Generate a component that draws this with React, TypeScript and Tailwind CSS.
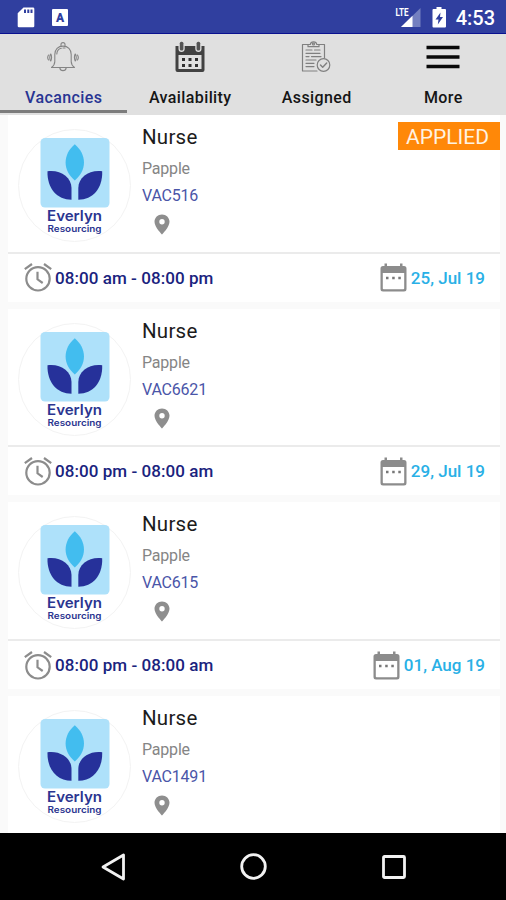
import React from "react";

type Vacancy = {
    role: string;
    place: string;
    code: string;
    time?: string;
    date?: string;
    applied?: boolean;
};

const VACANCIES: Vacancy[] = [
    { role: "Nurse", place: "Papple", code: "VAC516", time: "08:00 am - 08:00 pm", date: "25, Jul 19", applied: true },
    { role: "Nurse", place: "Papple", code: "VAC6621", time: "08:00 pm - 08:00 am", date: "29, Jul 19" },
    { role: "Nurse", place: "Papple", code: "VAC615", time: "08:00 pm - 08:00 am", date: "01, Aug 19" },
    { role: "Nurse", place: "Papple", code: "VAC1491" },
];

function StatusBar() {
    return (
        <div className="flex h-[34px] shrink-0 items-start justify-between border-b border-[#0a1190] bg-[#303f9f] pr-[11px] pl-[17px]">
            <div className="flex pt-[7px]">
                <svg width="18" height="21" viewBox="0 0 18 21">
                    <path d="M6.5 0.5H16a1.3 1.3 0 0 1 1.3 1.3V19a1.3 1.3 0 0 1-1.3 1.3H2A1.3 1.3 0 0 1 .7 19V6.3z" fill="#fff" />
                    <path d="M7 2.5h2v3.5H7zM10.3 2.5h2v3.5h-2zM13.5 2.5h2v3.5h-2z" fill="#303f9f" />
                </svg>
                <div className="mt-[2px] ml-[17px] flex h-[17px] w-[16px] items-center justify-center rounded-[1px] bg-white text-[12px] leading-none font-black text-[#303f9f]">
                    A
                </div>
            </div>
            <div className="flex pt-[7px] text-white">
                <svg width="26" height="21" viewBox="0 0 26 21">
                    <path d="M25.5 1v19H6z" fill="#7480c0" />
                    <path d="M17.5 8.8V20H6z" fill="#fff" />
                    <path d="M0 0h14v10H0z" fill="#303f9f" />
                    <text x="0.5" y="8.8" fontSize="11" fontWeight="700" textLength="13" lengthAdjust="spacingAndGlyphs" fill="#fff">LTE</text>
                </svg>
                <svg className="ml-[11px]" width="15" height="21" viewBox="0 0 15 21">
                    <path d="M4.5 0h5v2H13a1 1 0 0 1 1 1v16.5a1 1 0 0 1-1 1H1.5a1 1 0 0 1-1-1V3a1 1 0 0 1 1-1h3z" fill="#fff" />
                    <path d="M8.5 5.5L3.5 12.5H6.5L5.8 17.5 11 10H8z" fill="#303f9f" />
                </svg>
                <span className="ml-[9px] text-[20px] leading-[23px] font-medium">4:53</span>
            </div>
        </div>
    );
}

function BellIcon() {
    return (
        <svg width="32" height="30" viewBox="0 0 32 30" fill="none" stroke="#858585" strokeWidth="1.1" strokeLinecap="round" strokeLinejoin="round">
            <path d="M14 4.3V2.6a2 2 0 0 1 4 0v1.7" />
            <path d="M4.5 25.5c2-1.500 3.300-3 3.300-6v-7c0-5 3.300-8.400 8.200-8.400s8.200 3.400 8.200 8.400v7c0 3 1.300 4.500 3.300 6z" />
            <path d="M9.8 12c.2-3 2-5.200 4.500-5.700M16 6h2" />
            <path d="M12.8 25.8c.3 1.900 1.500 2.800 3.200 2.800s2.900-.9 3.200-2.800" />
            <path d="M3.8 12c-1.400 1.200-1.400 5.800 0 7 .9-2 .9-5 0-7zM1.500 13c-1 1.600-1 3.500 0 5M28.200 12c1.400 1.200 1.400 5.800 0 7-.9-2-.9-5 0-7zM30.500 13c1 1.600 1 3.500 0 5" />
        </svg>
    );
}

function AvailabilityIcon() {
    return (
        <svg width="30" height="32" viewBox="0 0 30 32">
            <path fillRule="evenodd" d="M.5 5h3V8c0 2 1.200 3 3 3s3.200-1 3.200-3V5h10.600V8c0 2 1.400 3 3.200 3s3-1 3-3V5h3V29a2 2 0 0 1-2 2h-25a2 2 0 0 1-2-2zM3.500 14v14h23V14z" fill="#424242" />
            <rect x="4.8" y="0.8" width="3.6" height="8.6" rx="1.5" fill="#555" />
            <rect x="21.6" y="0.8" width="3.6" height="8.6" rx="1.5" fill="#555" />
            <path d="M7 17h3v3H7zM13.500 17h3v3h-3zM20 17h3v3h-3zM7 23h3v3H7zM13.500 23h3v3h-3zM20 23h3v3h-3z" fill="#303030" />
        </svg>
    );
}

function AssignedIcon() {
    return (
        <svg width="30" height="32" viewBox="0 0 30 32" fill="none" stroke="#808080" strokeWidth="1.2" strokeLinecap="round" strokeLinejoin="round">
            <path d="M7.5 3.500H1.500v26.500H16M17.500 3.500h6v13.500" />
            <path d="M7 5.700V3.500h2.300c.5-3.500 6-3.500 6.500 0H18v2.200z" />
            <circle cx="12.5" cy="3" r="1" />
            <path d="M5 9h6M13.500 9H19M5 12.300h14M5 15.600h3M10.500 15.600H20M5 19h10M5 22.300h8M5 25.600h8" />
            <circle cx="22.5" cy="24" r="6.3" />
            <path d="M19.5 24l2.200 2.300 4-4.300" strokeWidth="1.4" />
        </svg>
    );
}

function MoreIcon() {
    return (
        <svg width="34" height="24" viewBox="0 0 34 24" stroke="#080808" strokeWidth="3.6">
            <path d="M.5 2.500h33M.5 12h33M.5 21.500h33" />
        </svg>
    );
}

const TABS = [
    { label: "Vacancies", icon: <BellIcon />, active: true },
    { label: "Availability", icon: <AvailabilityIcon /> },
    { label: "Assigned", icon: <AssignedIcon /> },
    { label: "More", icon: <MoreIcon /> },
];

function TabBar() {
    return (
        <div className="grid h-[81px] shrink-0 grid-cols-4 bg-[#e0e0e0]">
            {TABS.map((tab) => (
                <button key={tab.label} className="flex flex-col items-center">
                    <span className="flex h-[45px] items-center">{tab.icon}</span>
                    <span
                        className={`mt-[7px] h-[24px] pl-[1px] text-[16px] leading-[23px] font-medium tracking-[0.4px] ${tab.active ? "text-[#283593]" : "text-[#151515]"}`}
                    >
                        {tab.label}
                    </span>
                    {tab.active && <span className="h-[3px] w-full bg-[#7c7c7c]" />}
                </button>
            ))}
        </div>
    );
}

function Logo() {
    return (
        <div className="h-[113px] w-[113px] shrink-0 rounded-full border border-[#f3f3f3]">
            <svg width="111" height="111" viewBox="0 0 111 111">
                <rect x="21.5" y="8" width="69" height="69.5" rx="4.5" fill="#aee1fa" />
                <path d="M55.800 14.200C61.500 19 65 25.500 65 32.500S61.500 45.500 55.800 50.500C50 45.500 46.600 39.500 46.600 32.500S50 19 55.800 14.200z" fill="#42bdef" />
                <path d="M28.500 41.300C41 39.500 52.500 47 52.500 58V69.800C38 69.800 28 58.500 28.500 41.300z" fill="#26319a" />
                <path d="M83.200 41.300C70.700 39.500 59.300 47 59.300 58V69.800C73.800 69.800 83.700 58.500 83.200 41.300z" fill="#26319a" />
                <text x="28" y="91" fontSize="14.5" fontWeight="600" fontFamily="Inter, sans-serif" textLength="55" lengthAdjust="spacingAndGlyphs" fill="#2b3590">Everlyn</text>
                <text x="28.5" y="102" fontSize="9" fontWeight="600" fontFamily="Inter, sans-serif" textLength="54" lengthAdjust="spacingAndGlyphs" fill="#2b3590">Resourcing</text>
            </svg>
        </div>
    );
}

function PinIcon() {
    return (
        <svg width="16" height="21" viewBox="0 0 16 21">
            <path fillRule="evenodd" d="M8 .5C3.800.5.500 3.700.500 7.800.500 13.200 8 20.500 8 20.500s7.500-7.300 7.500-12.700C15.500 3.700 12.200.500 8 .5zM8 5a2.700 2.700 0 1 1 0 5.400A2.700 2.700 0 0 1 8 5z" fill="#8e8e8e" />
        </svg>
    );
}

function ClockIcon() {
    return (
        <svg width="28" height="29" viewBox="0 0 28 29" fill="none" stroke="#8c8c8c" strokeWidth="2.2">
            <circle cx="14" cy="15.8" r="11.7" />
            <path d="M13.500 8.800v7.500l5.200 3.700M.8 6.200L8 1M27.200 6.200L20 1" />
        </svg>
    );
}

function DateIcon() {
    return (
        <svg width="27" height="29" viewBox="0 0 27 29">
            <path fillRule="evenodd" d="M4.500.500h2.500V3h13V.500h2.500V3h1.500a2.500 2.500 0 0 1 2.500 2.500V26a2.500 2.500 0 0 1-2.500 2.500H3A2.500 2.500 0 0 1 .5 26V5.500A2.500 2.500 0 0 1 3 3h1.500zM2.800 10v15.500c0 .5.300.8.800.8h19.800c.5 0 .8-.3.800-.8V10z" fill="#8c8c8c" />
            <path d="M6 13.800h2.500v2.500H6zM12.200 13.800h2.500v2.500h-2.500zM18.300 13.800h2.500v2.500h-2.500z" fill="#777" />
        </svg>
    );
}

function VacancyCard({ role, place, code, time, date, applied }: Vacancy) {
    return (
        <div className="shrink-0 bg-white">
            <div className="flex h-[138.500px] border-b-2 border-[#ebebeb]">
                <div className="pt-[14px] pl-[10px]">
                    <Logo />
                </div>
                <div className="flex flex-1 flex-col items-start pt-[9px] pl-[11px]">
                    <h2 className="text-[20.500px] leading-[26px] tracking-[0.250px] text-[#1c1c1c]">{role}</h2>
                    <p className="mt-[8px] text-[16px] leading-[22px] tracking-[-0.200px] text-[#858585]">{place}</p>
                    <p className="mt-[5px] text-[16px] leading-[22px] tracking-[-0.200px] text-[#4a55a8]">{code}</p>
                    <span className="mt-[7px] ml-[12px]">
                        <PinIcon />
                    </span>
                </div>
                {applied && (
                    <span className="mt-[7px] h-[28px] w-[102px] bg-[#ff8808] pr-[3px] text-center text-[21px] leading-[30px] text-[#fff3e2]">
                        APPLIED
                    </span>
                )}
            </div>
            {time && (
                <div className="flex h-[48.300px] items-center justify-between pr-[15px] pl-[16px]">
                    <div className="flex items-center gap-[3px]">
                        <ClockIcon />
                        <span className="text-[17px] leading-[22px] font-medium tracking-[0.060px] text-[#1a237e]">{time}</span>
                    </div>
                    <div className="flex items-center gap-[4px]">
                        <DateIcon />
                        <span className="text-[17px] leading-[22px] font-medium text-[#29b0e6]">{date}</span>
                    </div>
                </div>
            )}
        </div>
    );
}

function NavBar() {
    return (
        <div className="grid h-[67px] shrink-0 grid-cols-[225px_56px_225px] items-center bg-black">
            <svg className="ml-[100px]" width="27" height="30" viewBox="0 0 27 30" fill="none" stroke="#f2f2f2" strokeWidth="2.8" strokeLinejoin="round">
                <path d="M3 15L23.500 3V27z" />
            </svg>
            <svg className="ml-[14px]" width="29" height="29" viewBox="0 0 29 29" fill="none" stroke="#f2f2f2" strokeWidth="2.8">
                <circle cx="14.5" cy="14.5" r="11.800" />
            </svg>
            <svg className="ml-[100px]" width="26" height="26" viewBox="0 0 26 26" fill="none" stroke="#f2f2f2" strokeWidth="2.8">
                <rect x="2.500" y="2.500" width="21" height="21" rx="1" />
            </svg>
        </div>
    );
}

export default function App() {
    return (
        <div className="flex h-[900px] w-[506px] flex-col overflow-hidden bg-[#fafafa] font-[Roboto,sans-serif]">
            <StatusBar />
            <TabBar />
            <div className="flex min-h-0 flex-1 flex-col gap-[6.900px] overflow-hidden pr-[6px] pl-[8px]">
                {VACANCIES.map((v) => (
                    <VacancyCard key={v.code} {...v} />
                ))}
            </div>
            <NavBar />
        </div>
    );
}
